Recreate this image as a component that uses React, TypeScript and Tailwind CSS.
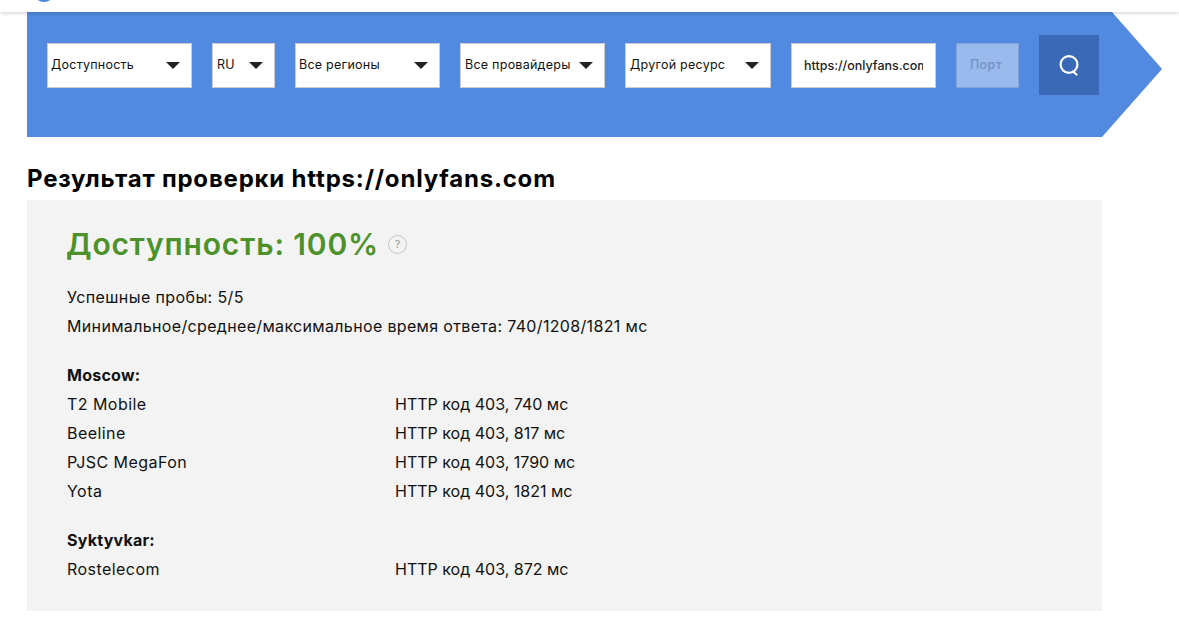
const rows = [
  { title: 'Moscow:', items: [
    ['T2 Mobile', 'HTTP код 403, 740 мс'],
    ['Beeline', 'HTTP код 403, 817 мс'],
    ['PJSC MegaFon', 'HTTP код 403, 1790 мс'],
    ['Yota', 'HTTP код 403, 1821 мс'],
  ] },
  { title: 'Syktyvkar:', items: [['Rostelecom', 'HTTP код 403, 872 мс']] },
]

const selects = [
  { label: 'Доступность', w: 'w-[145px]', pad: 'pl-[3px]' },
  { label: 'RU', w: 'w-[63px]', pad: 'pl-[4px]' },
  { label: 'Все регионы', w: 'w-[145px]', pad: 'pl-[3px]' },
  { label: 'Все провайдеры', w: 'w-[145px]', pad: 'pl-[4px]' },
  { label: 'Другой ресурс', w: 'w-[146px]', pad: 'pl-[4px]' },
]

function Select({ label, w, pad }: { label: string; w: string; pad: string }) {
  return (
    <div className={`flex h-[45px] shrink-0 items-center justify-between border border-[#c9ccd3] bg-white pr-[11px] text-[12.5px] tracking-[0.25px] text-[#111] ${w} ${pad}`}>
      <span className="whitespace-nowrap">{label}</span>
      <span className="h-0 w-0 border-x-[7px] border-t-[7px] border-x-transparent border-t-[#222]" />
    </div>
  )
}

export default function App() {
  return (
    <div className="min-h-[641px] overflow-hidden bg-white font-['Inter',_'Noto_Sans',_sans-serif] text-black">
      <header className="relative z-10 h-3 overflow-hidden bg-white shadow-[0_1px_4px_rgba(0,0,0,0.2)]">
        <div className="ml-[33px] mt-[-20px] h-[22px] w-[22px] rounded-full bg-[#4a86dc]" />
      </header>

      <div className="ml-[27px] flex h-[125px] w-[1135px] items-start gap-5 bg-[#518ae0] pl-5 pt-[31px] [clip-path:polygon(0_0,1085px_0,100%_57px,1075px_100%,0_100%)]">
        {selects.map((s) => (
          <Select key={s.label} {...s} />
        ))}
        <div className="h-[45px] w-[145px] shrink-0 border border-[#c9ccd3] bg-white px-3 text-[12.5px] font-medium leading-[43px] text-[#222]">
          <div className="overflow-hidden whitespace-nowrap">https://onlyfans.com</div>
        </div>
        <div className="flex h-[45px] w-[63px] shrink-0 items-center justify-center border border-[#7fa3da] bg-[#9ab9ec] pr-[3px] text-[12.5px] font-medium tracking-[0.4px] text-[#7391c4]">
          Порт
        </div>
        <button className="-mt-2 flex h-[60px] w-[60px] shrink-0 items-center justify-center bg-[#3969b7]">
          <svg width="22" height="22" viewBox="0 0 22 22" fill="none" stroke="white" strokeWidth="2.2">
            <circle cx="11" cy="10.5" r="8.4" />
            <path d="M15 17.5 L18.5 20.5" strokeLinecap="round" />
          </svg>
        </button>
      </div>

      <main className="ml-[27px] w-[1075px]">
        <h1 className="mt-[26px] text-[24px] font-bold leading-[32px] tracking-[0.8px]">Результат проверки https://onlyfans.com</h1>
        <section className="mt-[5px] h-[411px] bg-[#f3f3f3] pl-10 pt-[22px] text-[16px] text-[#111]">
          <div className="flex items-center gap-[9px]">
            <h2 className="-ml-px text-[30px] font-semibold leading-[44px] tracking-[0.85px] text-[#4c9129]">Доступность: 100%</h2>
            <span className="flex h-[19px] w-[19px] items-center justify-center rounded-full border border-[#c4c4c4] text-[11px] text-[#999]">?</span>
          </div>
          <p className="mt-[17px] leading-[29px] tracking-[0.4px]">Успешные пробы: 5/5</p>
          <p className="leading-[29px] tracking-[0.34px]">Минимальное/среднее/максимальное время ответа: 740/1208/1821 мс</p>

          {rows.map((group) => (
            <div key={group.title} className="mt-5">
              <div className="font-bold leading-[29px] tracking-[0.25px]">{group.title}</div>
              {group.items.map(([name, result]) => (
                <div key={name} className="flex leading-[29px]">
                  <span className="w-[328px] shrink-0 tracking-[0.45px]">{name}</span>
                  <span>{result}</span>
                </div>
              ))}
            </div>
          ))}
        </section>
      </main>
    </div>
  )
}
